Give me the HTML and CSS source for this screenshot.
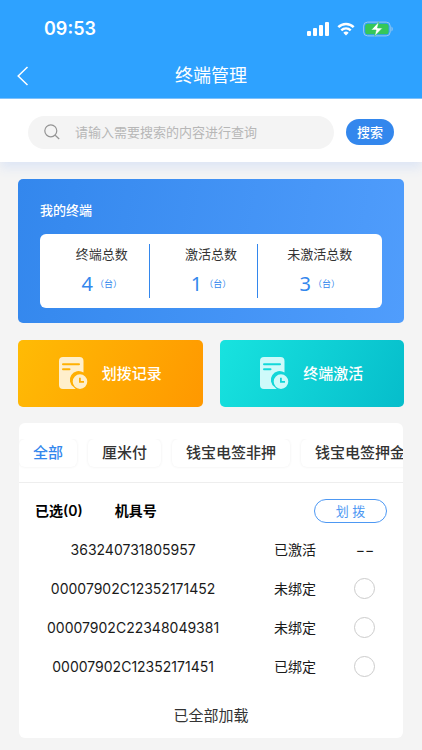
FILE: index.html
```html
<!DOCTYPE html>
<html lang="zh-CN">
<head>
<meta charset="utf-8">
<meta name="viewport" content="width=device-width, initial-scale=1">
<title>终端管理</title>
<link rel="stylesheet" href="styles.css">
</head>
<body>
<svg width="0" height="0" class="sprite" aria-hidden="true">
  <symbol id="record" viewBox="0 0 29 33">
    <path fill-rule="evenodd" d="M4 0h16.500a4 4 0 0 1 4 4v11.600a8.600 8.600 0 0 0-9.800 14.500c.600.800 1.200 1.300 2 1.900H4a4 4 0 0 1-4-4V4a4 4 0 0 1 4-4zM4 6.200a1 1 0 0 0 0 2h16a1 1 0 0 0 0-2zM4 11.200a1 1 0 0 0 0 2h6.500a1 1 0 0 0 0-2z"/>
    <path fill-rule="evenodd" d="M21 17.300a7.300 7.300 0 1 1 0 14.600a7.300 7.300 0 0 1 0-14.600zM20 20.800v5h5v-1.800h-3.200v-3.200z"/>
  </symbol>
</svg>

<header class="topbar">
  <div class="status">
    <time class="clock">09:53</time>
    <div class="status-icons">
      <svg width="22" height="14" viewBox="0 0 22 14" fill="#fff" aria-hidden="true">
        <rect x="0" y="9" width="4" height="5" rx="1"/>
        <rect x="6" y="6" width="4" height="8" rx="1"/>
        <rect x="12" y="3" width="4" height="11" rx="1"/>
        <rect x="18" y="0" width="4" height="14" rx="1"/>
      </svg>
      <svg width="18" height="14" viewBox="0 0 18 14" aria-hidden="true">
        <path d="M1.300 5.200a11 11 0 0 1 15.400 0" fill="none" stroke="#fff" stroke-width="2.500"/>
        <path d="M4.300 8.300a6.700 6.700 0 0 1 9.400 0" fill="none" stroke="#fff" stroke-width="2.400"/>
        <path d="M9 13.500 6.300 10.800a3.900 3.900 0 0 1 5.400 0z" fill="#fff"/>
      </svg>
      <svg width="30" height="16" viewBox="0 0 30 16" aria-hidden="true">
        <rect x=".6" y="1.100" width="26.600" height="13.800" rx="4" fill="none" stroke="#9cc9ee" stroke-width="1"/>
        <rect x="2.200" y="2.700" width="23.400" height="10.600" rx="2.600" fill="#35c759"/>
        <path d="M28.500 5.600c1.600.700 1.600 4.100 0 4.800z" fill="#9cc9ee"/>
        <path d="M15.800.8 8.200 9h4.900l-1.500 6.200L19.500 7h-5z" fill="#fff" stroke="#35c759" stroke-width=".6"/>
      </svg>
    </div>
  </div>
  <nav class="nav">
    <button class="back" type="button" aria-label="返回">
      <svg width="12" height="20" viewBox="0 0 12 20" fill="none" stroke="#fff" stroke-width="1.500" aria-hidden="true"><path d="M10.500 1 1.200 10l9.300 9"/></svg>
    </button>
    <h1>终端管理</h1>
  </nav>
</header>

<form class="search">
  <label class="search-box">
    <svg width="16" height="16" viewBox="0 0 16 16" fill="none" stroke="#949494" stroke-width="1.200" aria-hidden="true"><circle cx="6.800" cy="6.800" r="6"/><path d="m11.200 11.200 4 3.800"/></svg>
    <input type="text" placeholder="请输入需要搜索的内容进行查询" aria-label="搜索内容">
  </label>
  <button class="search-btn" type="button">搜索</button>
</form>

<main class="content">
  <section class="summary">
    <h2>我的终端</h2>
    <dl class="stats">
      <div class="stat"><dt>终端总数</dt><dd>4<small>（台）</small></dd></div>
      <div class="stat"><dt>激活总数</dt><dd>1<small>（台）</small></dd></div>
      <div class="stat"><dt>未激活总数</dt><dd>3<small>（台）</small></dd></div>
    </dl>
  </section>

  <div class="actions">
    <button class="action action-record" type="button"><svg width="29" height="33" aria-hidden="true"><use href="#record"/></svg>划拨记录</button>
    <button class="action action-activate" type="button"><svg width="29" height="33" aria-hidden="true"><use href="#record"/></svg>终端激活</button>
  </div>

  <section class="list">
    <div class="tabs">
      <button class="tab active" type="button">全部</button>
      <button class="tab" type="button">厘米付</button>
      <button class="tab" type="button">钱宝电签非押</button>
      <button class="tab" type="button">钱宝电签押金</button>
    </div>
    <div class="table-wrap">
      <table>
        <colgroup><col class="col-number"><col class="col-state"><col></colgroup>
        <thead>
          <tr>
            <th><div class="heading"><span>已选(0)</span><span>机具号</span></div></th>
            <th class="transfer-cell" colspan="2"><button class="transfer" type="button">划 拨</button></th>
          </tr>
        </thead>
        <tbody>
          <tr><td>363240731805957</td><td>已激活</td><td>−−</td></tr>
          <tr><td>00007902C12352171452</td><td>未绑定</td><td><input type="radio" name="t1" aria-label="00007902C12352171452"></td></tr>
          <tr><td>00007902C22348049381</td><td>未绑定</td><td><input type="radio" name="t2" aria-label="00007902C22348049381"></td></tr>
          <tr><td>00007902C12352171451</td><td>已绑定</td><td><input type="radio" name="t3" aria-label="00007902C12352171451"></td></tr>
        </tbody>
      </table>
    </div>
    <p class="loaded">已全部加载</p>
  </section>
</main>
</body>
</html>
```
FILE: styles.css
```css
* { box-sizing: border-box; }

body {
  margin: 0;
  background: #f4f4f4;
  color: #1a1a1a;
  font: 14px/20px Inter, "Noto Sans CJK SC", sans-serif;
}

h1, h2, p, dl, dd { margin: 0; }
button, input { font: inherit; }
button { border: 0; padding: 0; cursor: pointer; }
svg { display: block; flex: none; }
.sprite { position: absolute; }

.topbar {
  position: relative;
  z-index: 1;
  background: #2ea2ff;
  color: #fff;
}

.status {
  display: flex;
  align-items: center;
  justify-content: space-between;
  height: 57px;
  padding: 0 29px 0 44px;
}
.clock { font-size: 18px; font-weight: 600; }
.status-icons { display: flex; align-items: center; gap: 8px; }

.nav {
  display: grid;
  grid-template-columns: 44px 1fr 44px;
  align-items: center;
  height: 41px;
  padding-bottom: 4px;
}
.back {
  display: flex;
  align-items: center;
  height: 36px;
  padding-left: 17px;
  background: none;
}
h1 { font-size: 18px; font-weight: 400; text-align: center; }

.search {
  display: flex;
  align-items: center;
  gap: 12px;
  height: 64px;
  padding: 3px 28px 0;
  border-top: 1px solid #7fc1fb;
  background: #fff;
  box-shadow: 0 6px 10px #dee6f5;
}
.search-box {
  display: flex;
  flex: 1;
  align-items: center;
  gap: 15px;
  min-width: 0;
  height: 33px;
  padding: 0 16px;
  border-radius: 17px;
  background: #f4f4f4;
}
.search-box input {
  flex: 1;
  min-width: 0;
  padding: 0;
  border: 0;
  outline: 0;
  background: none;
  font-size: 13px;
}
.search-box input::placeholder { color: #b7b7b7; opacity: 1; }
.search-btn {
  width: 48px;
  height: 26px;
  border-radius: 13px;
  background: #3387ed;
  color: #fff;
  font-size: 13px;
  font-weight: 500;
}

.content {
  display: flex;
  flex-direction: column;
  gap: 17px;
  padding: 17px 18px 12px;
}

.summary {
  padding: 21px 22px 15px;
  border-radius: 5px;
  background: linear-gradient(100deg, #3387ed, #509dfc);
}
h2 {
  margin-bottom: 14px;
  color: #fff;
  font-size: 13px;
  font-weight: 500;
  line-height: 20px;
}
.stats {
  display: grid;
  grid-template-columns: repeat(3, 1fr);
  padding: 10px 16px 10px 0;
  border-radius: 6px;
  background: #fff;
}
.stat {
  height: 54px;
  padding-left: 15px;
  text-align: center;
}
.stat + .stat { border-left: 1px solid #3387ed; }
.stat dt { color: #333; font-size: 13px; line-height: 20px; }
.stat dd {
  display: flex;
  align-items: center;
  justify-content: center;
  gap: 2px;
  height: 40px;
  color: #3387ed;
  font: 400 20px/20px "Noto Sans", "Noto Sans CJK SC", sans-serif;
}
.stat small { font: 9px/20px "Noto Sans CJK SC", sans-serif; }

.actions { display: grid; grid-template-columns: 1fr 1fr; gap: 17px; }
.action {
  display: flex;
  align-items: center;
  justify-content: center;
  gap: 14px;
  height: 67px;
  border-radius: 5px;
  color: #fff;
  font-size: 15px;
  font-weight: 500;
}
.action-record { background: linear-gradient(115deg, #ffbb05, #ff9800); }
.action-record svg { fill: #ffefcc; }
.action-activate { background: linear-gradient(115deg, #18e3df, #06bdcb); }
.action-activate svg { fill: #cefafa; }

.list {
  margin: -1px 1px 0;
  padding-top: 16px;
  border-radius: 6px;
  background: #fff;
  overflow: hidden;
}
.tabs {
  display: flex;
  gap: 11px;
  padding-bottom: 15px;
  border-bottom: 1px solid #eee;
  overflow: hidden;
}
.tab {
  flex: none;
  height: 28px;
  padding: 0 14px;
  border-radius: 6px;
  background: #fff;
  box-shadow: 0 0 3px #eee;
  color: #333;
  font-size: 15px;
  font-weight: 500;
}
.tab.active { color: #3387ed; }

.table-wrap { padding: 8px 16px 0 0; }
table { width: 100%; border-collapse: collapse; table-layout: fixed; }
th, td { height: 39px; padding: 0; text-align: center; color: #1a1a1a; font-weight: 400; }
.col-number { width: 62%; }
.col-state { width: 26%; }
.heading {
  display: flex;
  gap: 32px;
  padding-left: 16px;
  color: #000;
  font-weight: 600;
}
th.transfer-cell { text-align: right; }
.transfer {
  width: 73px;
  height: 24px;
  border: 1px solid #4d98f3;
  border-radius: 12px;
  background: #fff;
  color: #4d98f3;
  font-size: 13px;
}
td input {
  display: block;
  width: 21px;
  height: 21px;
  margin: 0 auto;
  border: 1px solid #ccc;
  border-radius: 50%;
  background: #fff;
  appearance: none;
}
td input:checked { border: 6px solid #3387ed; }

.loaded {
  padding: 20px 0 12px;
  color: #333;
  font-size: 15px;
  text-align: center;
}
```
